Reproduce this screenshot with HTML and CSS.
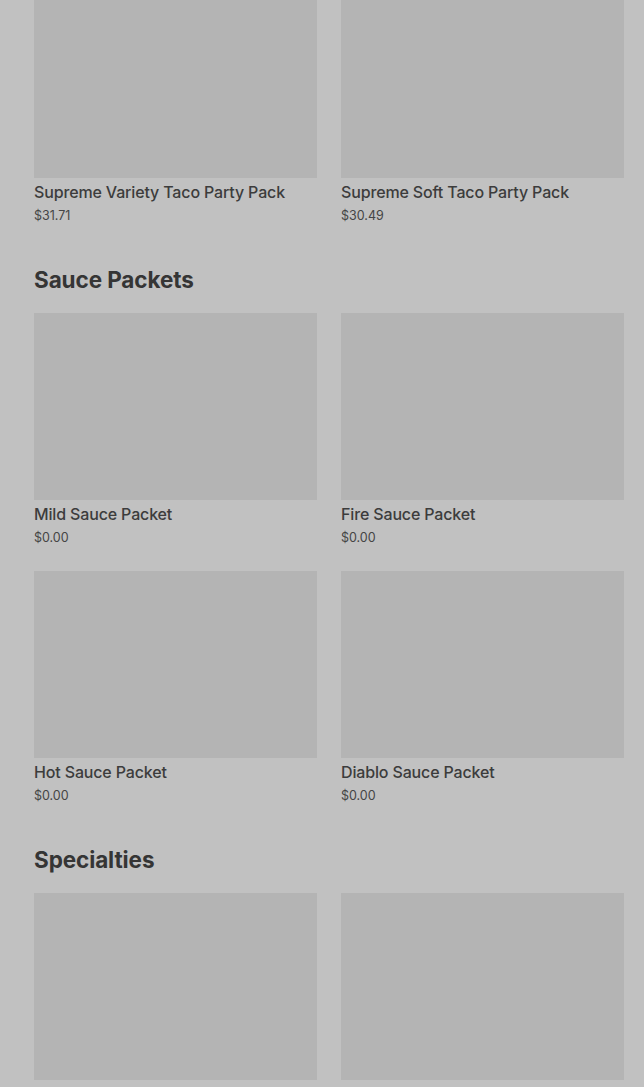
FILE: index.html
```html
<!DOCTYPE html>
<html lang="en">
<head>
    <meta charset="UTF-8">
    <meta name="viewport" content="width=device-width, initial-scale=1.0">
    <title>Menu</title>
    <link rel="stylesheet" href="styles.css">
</head>
<body>
    <div class="menu">
        <section class="section">
            <div class="grid">
                <div class="item">
                    <div class="item-img"></div>
                    <div class="item-name">Supreme Variety Taco Party Pack</div>
                    <div class="item-price">$31.71</div>
                </div>
                <div class="item">
                    <div class="item-img"></div>
                    <div class="item-name">Supreme Soft Taco Party Pack</div>
                    <div class="item-price">$30.49</div>
                </div>
            </div>
        </section>

        <section class="section">
            <h2 class="section-title">Sauce Packets</h2>
            <div class="grid">
                <div class="item">
                    <div class="item-img"></div>
                    <div class="item-name">Mild Sauce Packet</div>
                    <div class="item-price">$0.00</div>
                </div>
                <div class="item">
                    <div class="item-img"></div>
                    <div class="item-name">Fire Sauce Packet</div>
                    <div class="item-price">$0.00</div>
                </div>
                <div class="item">
                    <div class="item-img"></div>
                    <div class="item-name">Hot Sauce Packet</div>
                    <div class="item-price">$0.00</div>
                </div>
                <div class="item">
                    <div class="item-img"></div>
                    <div class="item-name">Diablo Sauce Packet</div>
                    <div class="item-price">$0.00</div>
                </div>
            </div>
        </section>

        <section class="section">
            <h2 class="section-title">Specialties</h2>
            <div class="grid">
                <div class="item">
                    <div class="item-img"></div>
                    <div class="item-name">Cinnabon Delights 12 Pack</div>
                    <div class="item-price">$7.29</div>
                </div>
                <div class="item">
                    <div class="item-img"></div>
                    <div class="item-name">Cheesy Fiesta Potatoes Party</div>
                    <div class="item-price">$9.49</div>
                </div>
            </div>
        </section>
    </div>
</body>
</html>
```

FILE: styles.css
```css
body {
    margin: 0;
    background-color: #c1c1c1;
    font-family: Inter, "Noto Sans", sans-serif;
    color: #3a3a3a;
}
.menu {
    margin-top: -9px;
    padding: 0 20px 0 34px;
}
.section {
    margin-bottom: 41px;
}
.section-title {
    margin: 0 0 19px 0;
    font-size: 22.5px;
    line-height: 28px;
    font-weight: 700;
    letter-spacing: -0.1px;
    color: #353535;
}
.grid {
    display: grid;
    grid-template-columns: 1fr 1fr;
    column-gap: 24px;
    row-gap: 24px;
}
.item-img {
    height: 187px;
    background-color: #b4b4b4;
}
.item-name {
    margin-top: 4px;
    font-size: 16px;
    line-height: 20px;
    font-weight: 500;
    letter-spacing: -0.15px;
    color: #3c3c3c;
}
.item-price {
    margin-top: 4px;
    font-size: 12.5px;
    line-height: 19px;
    color: #454545;
}
```
